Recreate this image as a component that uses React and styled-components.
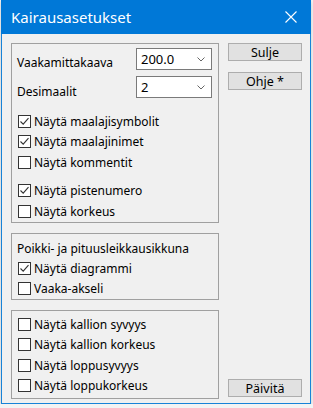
import styled, { createGlobalStyle } from 'styled-components'

const GlobalStyle = createGlobalStyle`
  html, body {
    margin: 0;
    padding: 0;
    background: #f3f3f3;
  }
  body {
    font-family: "Noto Sans", "Open Sans", sans-serif;
    font-size: 12px;
    color: #000000;
  }
`

const Window = styled.div`
  width: 310px;
  height: 404px;
  margin-left: 1px;
  border: 1px solid #1883d7;
  border-top: none;
  box-sizing: border-box;
  background: #f0f0f0;
  box-shadow: 0 2px 4px rgba(0, 0, 0, 0.18);
  display: flex;
  flex-direction: column;
`

const TitleBar = styled.div`
  height: 34px;
  margin: 0 -1px;
  background: #0078d7;
  color: #ffffff;
  display: flex;
  align-items: center;
  justify-content: space-between;
  padding: 0 10px 0 10px;
  font-size: 15px;
`

const CloseIcon = styled.svg`
  width: 12px;
  height: 12px;
  margin-right: 4px;
`

const Body = styled.div`
  display: flex;
  padding: 9px 8px 0 9px;
  gap: 9px;
`

const LeftColumn = styled.div`
  width: 208px;
  display: flex;
  flex-direction: column;
  gap: 10px;
`

const RightColumn = styled.div`
  width: 74px;
  display: flex;
  flex-direction: column;
  gap: 11px;
`

const Group = styled.div`
  border: 1px solid #a0a0a0;
  height: ${p => p.$h}px;
  box-sizing: border-box;
  padding: ${p => p.$pad || '5px 6px 0 5px'};
  display: flex;
  flex-direction: column;
`

const FieldRow = styled.div`
  display: flex;
  align-items: center;
  justify-content: space-between;
  height: 22px;
  margin-bottom: 6px;
`

const Label = styled.span`
  padding-top: ${p => p.$pt || 0}px;
`

const Combo = styled.div`
  width: 76px;
  height: 22px;
  box-sizing: border-box;
  border: 1px solid #7a7a7a;
  background: #ffffff;
  display: flex;
  align-items: center;
  justify-content: space-between;
  padding: 0 6px 0 4px;
  font-size: 13px;
  margin-top: -2px;
`

const Chevron = styled.svg`
  width: 8px;
  height: 5px;
`

const CheckRow = styled.label`
  display: flex;
  align-items: center;
  height: 20.5px;
  gap: 3px;
  margin-top: ${p => p.$mt || 0}px;
`

const Box = styled.span`
  width: 13px;
  height: 13px;
  box-sizing: border-box;
  border: 1px solid #333333;
  background: #ffffff;
  display: flex;
  align-items: center;
  justify-content: center;
  margin-left: 1px;
`

const GroupTitle = styled.div`
  height: 21px;
  display: flex;
  align-items: center;
`

const Button = styled.div`
  height: 18px;
  box-sizing: border-box;
  border: 1px solid #adadad;
  background: #e1e1e1;
  display: flex;
  align-items: center;
  justify-content: center;
  font-size: 12.5px;
  margin-top: ${p => p.$mt || 0}px;
`

function Check({ checked, children, mt }) {
  return (
    <CheckRow $mt={mt}>
      <Box>
        {checked && (
          <svg width="11" height="11" viewBox="0 0 11 11">
            <path d="M1.5 5.5 L4.2 8.2 L9.5 2.2" fill="none" stroke="#333" strokeWidth="1.1" />
          </svg>
        )}
      </Box>
      {children}
    </CheckRow>
  )
}

function Select({ value }) {
  return (
    <Combo>
      <span>{value}</span>
      <Chevron viewBox="0 0 8 5">
        <path d="M0.5 0.5 L4 4 L7.5 0.5" fill="none" stroke="#666" strokeWidth="1" />
      </Chevron>
    </Combo>
  )
}

export default function App() {
  return (
    <>
      <GlobalStyle />
      <Window>
        <TitleBar>
          <span>Kairausasetukset</span>
          <CloseIcon viewBox="0 0 12 12">
            <path d="M0.5 0.5 L11.5 11.5 M11.5 0.5 L0.5 11.5" stroke="#fff" strokeWidth="1.1" />
          </CloseIcon>
        </TitleBar>
        <Body>
          <LeftColumn>
            <Group $h={180}>
              <FieldRow>
                <Label $pt={5}>Vaakamittakaava</Label>
                <Select value="200.0" />
              </FieldRow>
              <FieldRow>
                <Label $pt={6}>Desimaalit</Label>
                <Select value="2" />
              </FieldRow>
              <Check checked mt={6}>Näytä maalajisymbolit</Check>
              <Check checked>Näytä maalajinimet</Check>
              <Check>Näytä kommentit</Check>
              <Check checked mt={8}>Näytä pistenumero</Check>
              <Check>Näytä korkeus</Check>
            </Group>
            <Group $h={67} $pad="4px 6px 0 5px">
              <GroupTitle>Poikki- ja pituusleikkausikkuna</GroupTitle>
              <Check checked>Näytä diagrammi</Check>
              <Check>Vaaka-akseli</Check>
            </Group>
            <Group $h={89} $pad="3px 6px 0 5px">
              <Check>Näytä kallion syvyys</Check>
              <Check>Näytä kallion korkeus</Check>
              <Check>Näytä loppusyvyys</Check>
              <Check>Näytä loppukorkeus</Check>
            </Group>
          </LeftColumn>
          <RightColumn>
            <Button>Sulje</Button>
            <Button>Ohje *</Button>
            <Button $mt={278}>Päivitä</Button>
          </RightColumn>
        </Body>
      </Window>
    </>
  )
}
